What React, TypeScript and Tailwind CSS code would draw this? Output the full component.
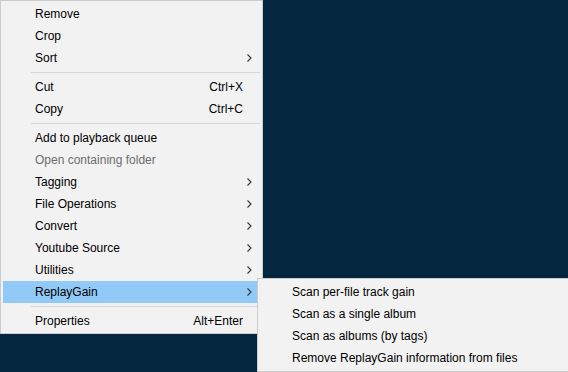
import React from 'react';

type Item =
  | { kind: 'sep' }
  | { kind: 'item'; label: string; shortcut?: string; sub?: boolean; disabled?: boolean; active?: boolean };

const mainItems: Item[] = [
  { kind: 'item', label: 'Remove' },
  { kind: 'item', label: 'Crop' },
  { kind: 'item', label: 'Sort', sub: true },
  { kind: 'sep' },
  { kind: 'item', label: 'Cut', shortcut: 'Ctrl+X' },
  { kind: 'item', label: 'Copy', shortcut: 'Ctrl+C' },
  { kind: 'sep' },
  { kind: 'item', label: 'Add to playback queue' },
  { kind: 'item', label: 'Open containing folder', disabled: true },
  { kind: 'item', label: 'Tagging', sub: true },
  { kind: 'item', label: 'File Operations', sub: true },
  { kind: 'item', label: 'Convert', sub: true },
  { kind: 'item', label: 'Youtube Source', sub: true },
  { kind: 'item', label: 'Utilities', sub: true },
  { kind: 'item', label: 'ReplayGain', sub: true, active: true },
  { kind: 'sep' },
  { kind: 'item', label: 'Properties', shortcut: 'Alt+Enter' },
];

const replayGainItems = [
  'Scan per-file track gain',
  'Scan as a single album',
  'Scan as albums (by tags)',
  'Remove ReplayGain information from files',
];

// small chevron like the Win10 menu arrow
function Arrow() {
  return (
    <svg width="5" height="8" viewBox="0 0 5 8" className="shrink-0">
      <path d="M0.5 0.5 L4 4 L0.5 7.5" fill="none" stroke="#333" strokeWidth="1.1" />
    </svg>
  );
}

function MenuRow({ item }: { item: Item }) {
  if (item.kind === 'sep') {
    return (
      <div className="h-[7px] flex items-center pl-[28px]">
        <div className="h-px w-full bg-[#d7d7d7]" />
      </div>
    );
  }
  return (
    <div
      className={`h-[22px] flex items-center pl-[32px] ${item.active ? 'bg-[#91c9f7]' : ''} ${
        item.disabled ? 'text-[#6d6d6d]' : 'text-black'
      }`}
    >
      <span className="flex-1 whitespace-nowrap">{item.label}</span>
      {item.shortcut && <span className="whitespace-nowrap">{item.shortcut}</span>}
      <div className="w-[17px] flex justify-end pr-[8px]">{item.sub && <Arrow />}</div>
    </div>
  );
}

export default function App() {
  return (
    <div
      className="relative w-[568px] h-[372px] overflow-hidden bg-[#05263f] text-[12px]"
      style={{ fontFamily: '"Segoe UI", "Liberation Sans", Arial, sans-serif' }}
    >
      {/* main context menu */}
      <div className="absolute left-0 top-0 w-[263px] bg-[#f2f2f2] border border-[#cccccc] pt-[2px] pb-px px-[2px]">
        {mainItems.map((item, i) => (
          <MenuRow key={i} item={item} />
        ))}
      </div>

      {/* ReplayGain submenu */}
      <div className="absolute left-[257px] top-[278px] w-[330px] bg-[#f2f2f2] border border-[#cccccc] pt-[2px] pb-[2px] px-[2px]">
        {replayGainItems.map((label) => (
          <div key={label} className="h-[22px] flex items-center pl-[32px] text-black whitespace-nowrap">
            {label}
          </div>
        ))}
      </div>
    </div>
  );
}
